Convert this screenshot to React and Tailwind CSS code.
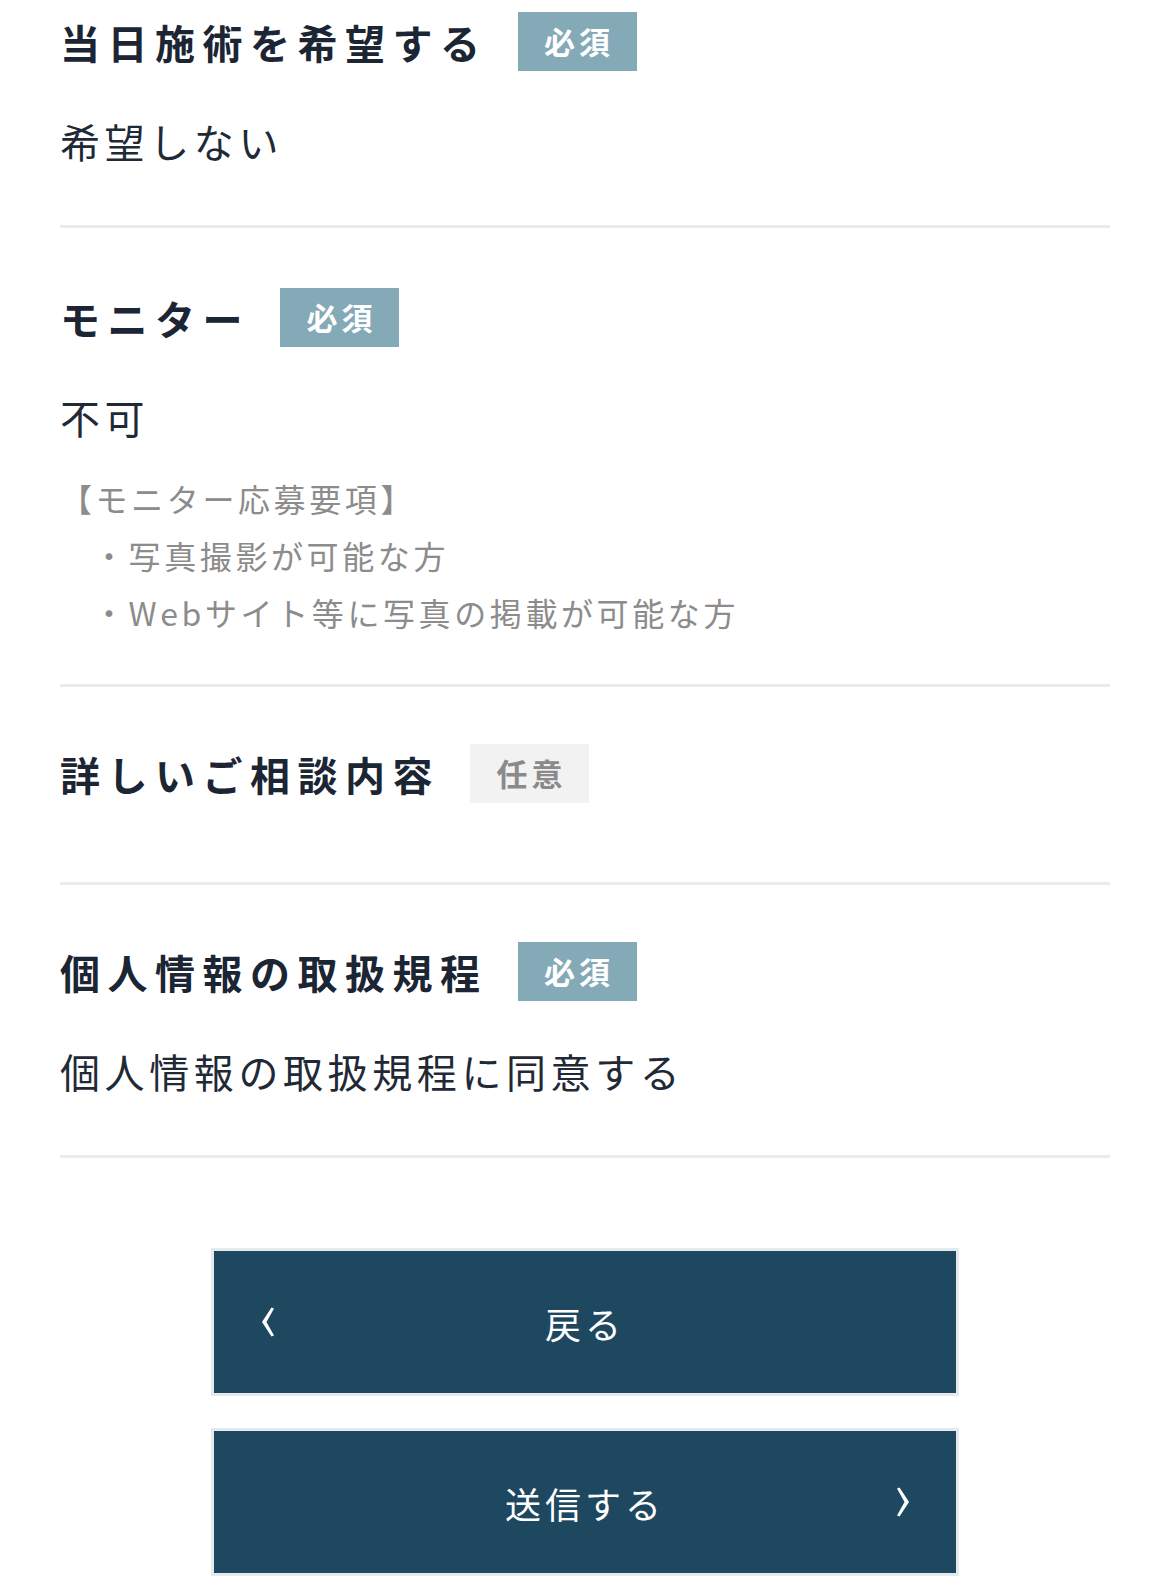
const sans = "font-['Noto_Sans_CJK_JP',sans-serif]";
const serif = "font-['Liberation_Serif','Noto_Sans_CJK_JP',serif]";

function Badge({ required }) {
  return required ? (
    <span className="inline-flex h-[59px] w-[119px] items-center justify-center bg-[#84a9b7] pl-[4px] text-[31px] font-bold tracking-[4px] text-white">
      必須
    </span>
  ) : (
    <span className="inline-flex h-[59px] w-[119px] items-center justify-center bg-[#f2f2f2] pl-[4px] text-[31px] font-bold tracking-[4px] text-[#8a8a8a]">
      任意
    </span>
  );
}

function Title({ children, required }) {
  return (
    <div className="flex h-[59px] items-center gap-[30px]">
      <h2 className="text-[40px] leading-none font-bold tracking-[7.5px] text-[#1b2533]">{children}</h2>
      <Badge required={required} />
    </div>
  );
}

function Value({ children }) {
  return <p className="mt-[42px] text-[40px] leading-[57px] tracking-[4.6px] text-[#1f2a36]">{children}</p>;
}

function Chevron({ dir }) {
  return (
    <svg width="14" height="30" viewBox="0 0 14 30" className={dir === 'right' ? 'rotate-180' : ''}>
      <path d="M10.5 0.5 L1 15 L10.5 29.5 L13 28.5 L5.5 15 L13 1.5 Z" fill="white" />
    </svg>
  );
}

export default function App() {
  return (
    <div className={`min-h-screen w-full bg-white ${sans}`}>
      <div className="px-[60px]">
        {/* 当日施術 */}
        <section className="border-b-[3px] border-[#ebebeb] pt-[12px] pb-[55px]">
          <Title required>当日施術を希望する</Title>
          <Value>希望しない</Value>
        </section>

        {/* モニター */}
        <section className="border-b-[3px] border-[#ebebeb] pt-[60px] pb-[43px]">
          <Title required>モニター</Title>
          <Value>不可</Value>
          <div className="mt-[24px] text-[32px] leading-[57px] tracking-[3.6px] text-[#8c8c8c]">
            <p>【モニター応募要項】</p>
            <ul className="pl-[33px]">
              <li>・写真撮影が可能な方</li>
              <li>・Webサイト等に写真の掲載が可能な方</li>
            </ul>
          </div>
        </section>

        {/* 詳しいご相談内容 */}
        <section className="border-b-[3px] border-[#ebebeb] pt-[57px] pb-[79px]">
          <Title>詳しいご相談内容</Title>
        </section>

        {/* 個人情報 */}
        <section className="border-b-[3px] border-[#ebebeb] pt-[57px] pb-[55px]">
          <Title required>個人情報の取扱規程</Title>
          <Value>個人情報の取扱規程に同意する</Value>
        </section>

        {/* Buttons */}
        <div className="flex flex-col items-center gap-[32px] pt-[90px] pb-[20px]">
          <button className="relative flex h-[148px] w-[748px] items-center justify-center border-[3px] border-[#e5eaee] bg-[#1e4760] text-white">
            <span className="absolute left-[47px] top-1/2 -translate-y-1/2">
              <Chevron dir="left" />
            </span>
            <span className={`${serif} translate-y-[5px] text-[36px] tracking-[4px]`}>戻る</span>
          </button>
          <button className="relative flex h-[148px] w-[748px] items-center justify-center border-[3px] border-[#e5eaee] bg-[#1e4760] text-white">
            <span className={`${serif} translate-y-[5px] text-[36px] tracking-[4px]`}>送信する</span>
            <span className="absolute right-[46px] top-1/2 -translate-y-1/2">
              <Chevron dir="right" />
            </span>
          </button>
        </div>
      </div>
    </div>
  );
}
